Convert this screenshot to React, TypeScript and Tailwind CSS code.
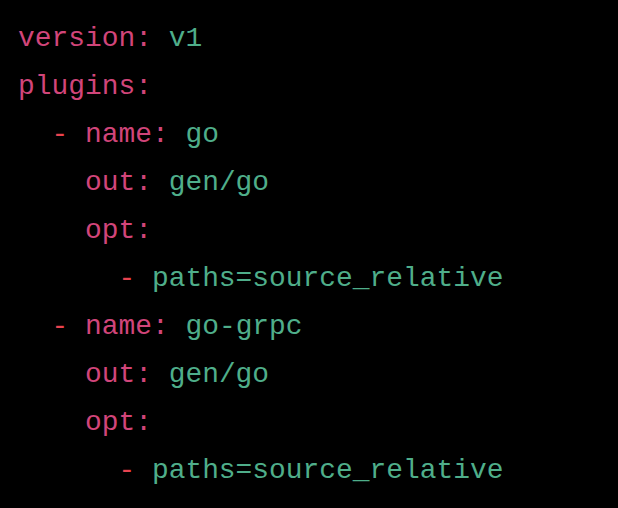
import React from 'react';

type Line = { indent: number; dash?: boolean; key: string; value?: string };

const lines: Line[] = [
  { indent: 0, key: 'version', value: 'v1' },
  { indent: 0, key: 'plugins' },
  { indent: 2, dash: true, key: 'name', value: 'go' },
  { indent: 4, key: 'out', value: 'gen/go' },
  { indent: 4, key: 'opt' },
  { indent: 6, dash: true, key: '', value: 'paths=source_relative' },
  { indent: 2, dash: true, key: 'name', value: 'go-grpc' },
  { indent: 4, key: 'out', value: 'gen/go' },
  { indent: 4, key: 'opt' },
  { indent: 6, dash: true, key: '', value: 'paths=source_relative' },
];

const App: React.FC = () => {
  return (
    <div className="w-[618px] h-[508px] bg-black overflow-hidden pl-[18px] pt-[15px]">
      <pre className="font-['Liberation_Mono',monospace] text-[27.9px] leading-[48px] whitespace-pre">
        {lines.map((line, i) => (
          <div key={i}>
            {' '.repeat(line.indent)}
            {line.dash && <span className="text-[#e8434f]">- </span>}
            {line.key && <span className="text-[#d1457a]">{line.key}:</span>}
            {line.value && (
              <span className="text-[#4fae8a]">
                {line.key ? ' ' : ''}
                {line.value}
              </span>
            )}
          </div>
        ))}
      </pre>
    </div>
  );
};

export default App;
